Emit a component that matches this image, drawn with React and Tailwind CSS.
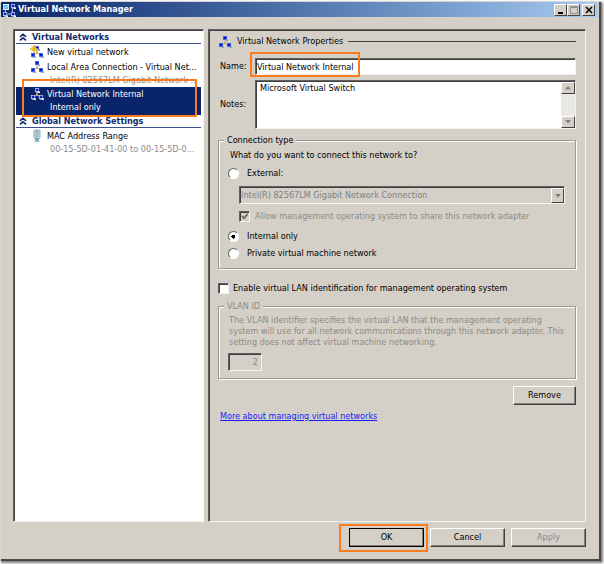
import React, { useState } from "react";

const BUTTON = "h-[19px] border border-t-white border-l-white border-r-[#404040] border-b-[#404040] bg-[#d4d0c8] text-center shadow-[inset_-1px_-1px_0_#808080]";
const SUNKEN = "border border-t-[#606060] border-l-[#606060] border-r-[#f4f2ee] border-b-[#f4f2ee] shadow-[inset_1px_1px_0_#404040]";
const GROUP = "border border-[#9a9892] shadow-[1px_1px_0_#fff,inset_1px_1px_0_#fff]";
const RADIO = "size-[11px] shrink-0 appearance-none rounded-full border border-t-[#606060] border-l-[#606060] border-r-white border-b-white bg-white checked:bg-[radial-gradient(circle,#000_2px,#fff_2px)]";
const CAPTION = "flex h-[12px] items-center justify-center border border-t-white border-l-white border-r-[#404040] border-b-[#404040] bg-[#d4d0c8]";
const HIGHLIGHT = "pointer-events-none absolute border-2 border-[#f97d1e]";

function Computer({ x, y, light }) {
  return (
    <g transform={`translate(${x} ${y})`}>
      <path d="M0 0h4v4H0z" fill={light ? "#e6ecfa" : "#5f7be0"} />
      <path d="M0.6 0.6h2.9v2.7H0.6z" fill="#0a1fd0" />
      <path d="M2.6 3.4h2.4v1.6H2.6z" fill={light ? "#f4f4f4" : "#8e9bbd"} />
      <path d="M1 4h1.6v0.8H1z" fill="#b8c2da" />
    </g>
  );
}

function NetworkIcon({ star, light }) {
  return (
    <svg viewBox="0 0 14 14" className="size-[14px] shrink-0" aria-hidden="true">
      <path
        d="M7 5v3M7 8L3.6 10M7 8l3.4 2"
        fill="none"
        stroke={light ? "#e8e8e8" : "#a8a8a8"}
        strokeWidth="0.9"
      />
      <Computer x={5} y={1} light={light} />
      <Computer x={1} y={8} light={light} />
      <Computer x={9} y={8} light={light} />
      <path d="M6.2 7h1.6v1.8H6.2z" fill="#e3a81c" />
      {star && (
        <path
          d="M4 0l1.1 2.8L8 4 5.1 5.2 4 8 2.9 5.2 0 4l2.9-1.2zM1.4 1.4l5.2 5.2M6.6 1.4L1.4 6.6"
          fill="#f9cf2a"
          stroke="#e0a818"
          strokeWidth="0.7"
        />
      )}
    </svg>
  );
}

function ManagerIcon() {
  return (
    <svg viewBox="0 0 14 14" className="size-[14px] shrink-0" aria-hidden="true">
      <path d="M3.4 6v5h7V5" fill="none" stroke="#cfd6e6" strokeWidth="0.9" />
      <path d="M1 1h6v6H1z" fill="#e9f5fb" />
      <path d="M1.8 2h4.4v3.8H1.8z" fill="#35b4e6" />
      <path d="M2.6 3.6l1.2 1.2L6 2.2" fill="none" stroke="#fff" strokeWidth="0.8" />
      <Computer x={9} y={1} light />
      <Computer x={1} y={9} light />
      <Computer x={9} y={9} light />
    </svg>
  );
}

function AdapterIcon() {
  return (
    <svg viewBox="0 0 14 14" className="size-[14px] shrink-0" aria-hidden="true">
      <path d="M4 2Q4 1 5 1h4q1 0 1 1v6.6q0 1-1 1H5q-1 0-1-1z" fill="#c5dbe6" stroke="#7d97a6" strokeWidth="0.8" />
      <path d="M6.2 2.4h1.6v5H6.2z" fill="#fff" stroke="#5f8396" strokeWidth="0.7" />
      <path d="M5.4 9.6h3.2v1.6H5.4z" fill="#3f8fb8" />
      <path d="M4.8 11.2h4.4v1.8H4.8z" fill="#8fb2c4" />
    </svg>
  );
}

function Chevrons() {
  return (
    <svg viewBox="0 0 8 8" className="size-2 shrink-0" fill="none" stroke="#14296b" strokeWidth="1.6" aria-hidden="true">
      <path d="M1 3.8L4 1.2l3 2.6M1 7.4l3-2.6 3 2.6" />
    </svg>
  );
}

function Arrow({ down }) {
  return (
    <svg viewBox="0 0 6 4" className="h-1 w-1.5" aria-hidden="true">
      <path d={down ? "M0 0h6L3 3.5z" : "M0 3.5h6L3 0z"} fill="#808080" />
    </svg>
  );
}

function SectionHeading({ children }) {
  return (
    <h2 className="mb-px flex h-[13px] items-center gap-[5px] border-b border-[#3d4f8c] pl-[3px] font-bold text-[#14296b]">
      <Chevrons />
      {children}
    </h2>
  );
}

function NavItem({ icon, label, detail, selected, onClick }) {
  return (
    <button
      type="button"
      onClick={onClick}
      className={`flex w-full gap-[3px] pl-[14px] text-left whitespace-nowrap ${selected ? "bg-[#0a246a] pb-0.5 text-white" : "text-black"}`}
    >
      {icon}
      <span className="flex-1">
        <span className="block leading-[15px]">{label}</span>
        {detail && (
          <span className={`block pl-[3px] leading-[11px] ${selected ? "" : "text-[#8c8c8c]"}`}>{detail}</span>
        )}
      </span>
    </button>
  );
}

function TitleBar() {
  return (
    <header className="flex h-[15px] items-center bg-linear-to-r from-[#0a246a] to-[#a6caf0] pr-[3px] pl-px">
      <ManagerIcon />
      <h1 className="flex-1 pl-0.5 font-bold text-white">Virtual Network Manager</h1>
      <button type="button" aria-label="Minimize" className={`${CAPTION} w-[13px]`}>
        <svg viewBox="0 0 8 8" className="size-2"><path d="M1 6h5v2H1z" /></svg>
      </button>
      <button type="button" aria-label="Maximize" disabled className={`${CAPTION} w-[13px]`}>
        <svg viewBox="0 0 8 8" className="size-2" fill="none" stroke="#909090">
          <path d="M0.5 0.5h7v7h-7zM0.5 1.5h7" />
        </svg>
      </button>
      <button type="button" aria-label="Close" className={`${CAPTION} ml-0.5 w-[13px]`}>
        <svg viewBox="0 0 8 8" className="size-2" stroke="#000" strokeWidth="1.5"><path d="M1 1l6 6M7 1L1 7" /></svg>
      </button>
    </header>
  );
}

function Sidebar() {
  const [selected, setSelected] = useState("internal");

  return (
    <nav className={`w-[191px] shrink-0 bg-white px-0.5 pt-px ${SUNKEN}`}>
      <SectionHeading>Virtual Networks</SectionHeading>
      <NavItem
        icon={<NetworkIcon star />}
        label="New virtual network"
        selected={selected === "new"}
        onClick={() => setSelected("new")}
      />
      <div className="pb-px">
        <NavItem
          icon={<NetworkIcon />}
          label="Local Area Connection - Virtual Net..."
          detail="Intel(R) 82567LM Gigabit Network ..."
          selected={selected === "local"}
          onClick={() => setSelected("local")}
        />
      </div>
      <div className="relative">
        <NavItem
          icon={<NetworkIcon light />}
          label="Virtual Network Internal"
          detail="Internal only"
          selected={selected === "internal"}
          onClick={() => setSelected("internal")}
        />
        <span className={`${HIGHLIGHT} -top-2 right-1 -bottom-0.5 left-1.5`} />
      </div>
      <SectionHeading>Global Network Settings</SectionHeading>
      <NavItem
        icon={<AdapterIcon />}
        label="MAC Address Range"
        detail="00-15-5D-01-41-00 to 00-15-5D-0..."
        selected={selected === "mac"}
        onClick={() => setSelected("mac")}
      />
    </nav>
  );
}

function ConnectionType() {
  const [type, setType] = useState("internal");

  return (
    <fieldset className={`mt-1 px-[9px] pb-[7px] ${GROUP}`}>
      <legend className="-ml-1 bg-[#d4d0c8] px-[3px] leading-[15px]">Connection type</legend>
      <p className="pl-0.5 leading-[15px]">What do you want to connect this network to?</p>
      <label className="mt-[3px] flex h-[15px] items-center gap-2">
        <input type="radio" name="type" checked={type === "external"} onChange={() => setType("external")} className={RADIO} />
        External:
      </label>
      <div className="mt-[5px] mr-px ml-[11px]">
        <div className="relative">
          <select
            disabled
            aria-label="External network adapter"
            className={`block h-[18px] w-full appearance-none bg-[#d4d0c8] pl-px text-[#808080] opacity-100 ${SUNKEN}`}
          >
            <option>Intel(R) 82567LM Gigabit Network Connection</option>
          </select>
          <span className="pointer-events-none absolute top-0.5 right-px bottom-px flex w-[13px] items-center justify-center border border-t-white border-l-white border-r-[#404040] border-b-[#404040] bg-[#d4d0c8]">
            <Arrow down />
          </span>
        </div>
        <label className="mt-[5px] flex h-[15px] items-center gap-[5px] text-[#8c8a84]">
          <span className="relative flex size-[11px]">
            <input type="checkbox" disabled defaultChecked className={`size-[11px] appearance-none bg-[#d4d0c8] ${SUNKEN}`} />
            <svg viewBox="0 0 11 11" className="pointer-events-none absolute inset-0" fill="none" stroke="#606060" strokeWidth="1.6" aria-hidden="true">
              <path d="M3 5l2 2.2L8.6 3" />
            </svg>
          </span>
          Allow management operating system to share this network adapter
        </label>
      </div>
      <label className="mt-[5px] flex h-[15px] items-center gap-2">
        <input type="radio" name="type" checked={type === "internal"} onChange={() => setType("internal")} className={RADIO} />
        Internal only
      </label>
      <label className="mt-0.5 flex h-[15px] items-center gap-2">
        <input type="radio" name="type" checked={type === "private"} onChange={() => setType("private")} className={RADIO} />
        Private virtual machine network
      </label>
    </fieldset>
  );
}

function Properties() {
  const [name, setName] = useState("Virtual Network Internal");
  const [notes, setNotes] = useState("Microsoft Virtual Switch");

  return (
    <section className={`min-w-0 flex-1 px-[9px] pt-1 ${SUNKEN}`}>
      <div className="flex h-[15px] items-center gap-[5px]">
        <NetworkIcon />
        <h2>Virtual Network Properties</h2>
        <span className="h-px flex-1 bg-[#404040]" />
      </div>
      <div className="mt-[9px] flex items-center">
        <label htmlFor="name" className="w-[37px] pl-0.5">Name:</label>
        <div className="relative flex flex-1">
          <input
            id="name"
            value={name}
            onChange={(e) => setName(e.target.value)}
            className={`h-[17px] w-full bg-white pl-px outline-none ${SUNKEN}`}
          />
          <span className={`${HIGHLIGHT} -top-1.5 -bottom-0.5 -left-[5px] w-[110px]`} />
        </div>
      </div>
      <div className="mt-[5px] flex items-center">
        <label htmlFor="notes" className="w-[37px] pl-0.5">Notes:</label>
        <div className={`flex h-[49px] flex-1 bg-white pt-px pl-px ${SUNKEN}`}>
          <textarea
            id="notes"
            value={notes}
            onChange={(e) => setNotes(e.target.value)}
            className="h-full flex-1 resize-none overflow-hidden pl-[3px] leading-[13px] outline-none"
          />
          <div className="flex w-[14px] flex-col justify-between bg-[#eae8e4]">
            <button type="button" aria-label="Scroll up" className={`${CAPTION} w-[14px]`}><Arrow /></button>
            <button type="button" aria-label="Scroll down" className={`${CAPTION} w-[14px]`}><Arrow down /></button>
          </div>
        </div>
      </div>
      <ConnectionType />
      <label className="mt-3 flex h-[15px] items-center gap-1">
        <input
          type="checkbox"
          className={`size-[11px] appearance-none bg-white checked:bg-[linear-gradient(#000,#000)] checked:bg-size-[5px_5px] checked:bg-center checked:bg-no-repeat ${SUNKEN}`}
        />
        Enable virtual LAN identification for management operating system
      </label>
      <fieldset disabled className={`mt-[3px] px-[9px] pb-[7px] text-[#8c8a84] ${GROUP}`}>
        <legend className="-ml-1 bg-[#d4d0c8] px-[3px] leading-[15px]">VLAN ID</legend>
        <p className="mt-px pl-px leading-[11px]">
          The VLAN identifier specifies the virtual LAN that the management operating
          <br />
          system will use for all network communications through this network adapter. This
          <br />
          setting does not affect virtual machine networking.
        </p>
        <input
          aria-label="VLAN ID"
          defaultValue="2"
          className={`mt-[5px] block h-[18px] w-[34px] bg-[#d4d0c8] pr-[3px] text-right ${SUNKEN}`}
        />
      </fieldset>
      <div className="mt-[7px] flex justify-end">
        <button type="button" className={`${BUTTON} w-[63px]`}>Remove</button>
      </div>
      <a href="#managing" className="mt-[5px] ml-0.5 inline-block leading-[13px] text-[#1a1aff] underline">
        More about managing virtual networks
      </a>
    </section>
  );
}

export default function App() {
  return (
    <div className="flex min-h-screen flex-col bg-white pt-0.5 pr-[5px] pb-[5px] pl-px font-['DejaVu_Sans_Condensed','DejaVu_Sans',sans-serif] text-[9px] leading-[13px] text-black">
      <main className="flex flex-1 flex-col bg-[#d4d0c8] pr-px shadow-[1px_1px_0_1px_#484848,2px_2px_2px_2px_#808080]">
        <TitleBar />
        <div className="flex flex-1 gap-1 px-3 pt-3">
          <Sidebar />
          <Properties />
        </div>
        <footer className="flex justify-end gap-1.5 pt-1.5 pr-3 pb-3">
          <div className="relative flex">
            <button type="button" className={`${BUTTON} w-[75px] outline outline-black -outline-offset-1`}>OK</button>
            <span className={`${HIGHLIGHT} -top-1 -right-1 -bottom-[5px] -left-2.5`} />
          </div>
          <button type="button" className={`${BUTTON} w-[75px]`}>Cancel</button>
          <button type="button" disabled className={`${BUTTON} w-[75px] text-[#8c8a84]`}>Apply</button>
        </footer>
      </main>
    </div>
  );
}
